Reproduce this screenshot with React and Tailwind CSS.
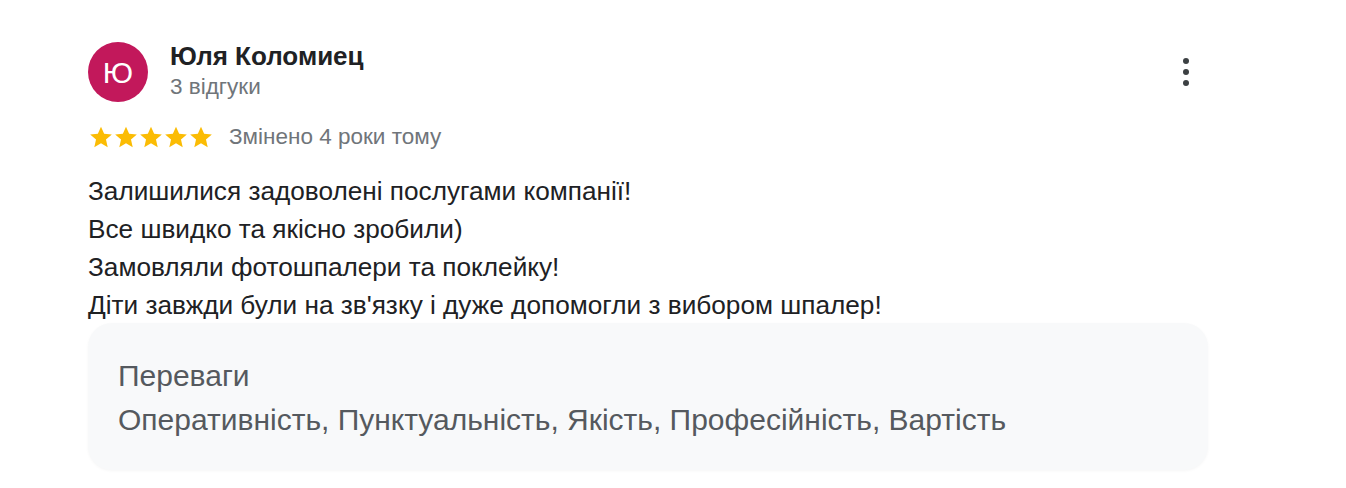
import React from "react";

const Star = () => (
  <svg viewBox="0 0 24 24" className="w-[26px] h-[26px] -mx-[0.5px]">
    <path
      fill="#fbbc04"
      d="M12 2.5l2.9 6.6 7.1.6-5.4 4.7 1.6 7-6.2-3.7-6.2 3.7 1.6-7L2 9.7l7.1-.6z"
    />
  </svg>
);

const App = () => {
  const lines = [
    "Залишилися задоволені послугами компанії!",
    "Все швидко та якісно зробили)",
    "Замовляли фотошпалери та поклейку!",
    "Діти завжди були на зв'язку і дуже допомогли з вибором шпалер!",
  ];

  return (
    <div className="w-[1346px] h-[488px] bg-white font-['Liberation_Sans',Arial,sans-serif] text-[#202124]">
      <div className="w-[1120px] ml-[88px] pt-[42px]">
        <div className="flex items-start">
          <div className="w-[60px] h-[60px] rounded-full bg-[#c2185b] flex items-center justify-center text-white text-[30px]">
            Ю
          </div>
          <div className="ml-[22px] flex-1 -mt-[2px]">
            <div className="text-[26px] font-bold leading-[32px]">Юля Коломиец</div>
            <div className="text-[22.5px] text-[#70757a] leading-[30px]">3 відгуки</div>
          </div>
          <button className="mt-[16px] mr-[19px] flex flex-col gap-[5px] items-center">
            <span className="w-[6px] h-[6px] rounded-full bg-[#3c4043]" />
            <span className="w-[6px] h-[6px] rounded-full bg-[#3c4043]" />
            <span className="w-[6px] h-[6px] rounded-full bg-[#3c4043]" />
          </button>
        </div>

        <div className="flex items-center mt-[22px] h-[26px]">
          <div className="flex">
            <Star />
            <Star />
            <Star />
            <Star />
            <Star />
          </div>
          <span className="ml-[16px] text-[22.5px] text-[#70757a] leading-[26px]">
            Змінено 4 роки тому
          </span>
        </div>

        <div className="mt-[22px] text-[26.2px] leading-[38px]">
          {lines.map((l) => (
            <div key={l}>{l}</div>
          ))}
        </div>

        <div className="-mt-[1px] rounded-[24px] bg-[#f8f9fa] px-[30px] pt-[31px] pb-[28px] shadow-[0_1px_3px_rgba(0,0,0,0.04)] text-[#55595e]">
          <div className="text-[30px] leading-[44px]">Переваги</div>
          <div className="text-[30px] leading-[44px]">
            Оперативність, Пунктуальність, Якість, Професійність, Вартість
          </div>
        </div>
      </div>
    </div>
  );
};

export default App;
